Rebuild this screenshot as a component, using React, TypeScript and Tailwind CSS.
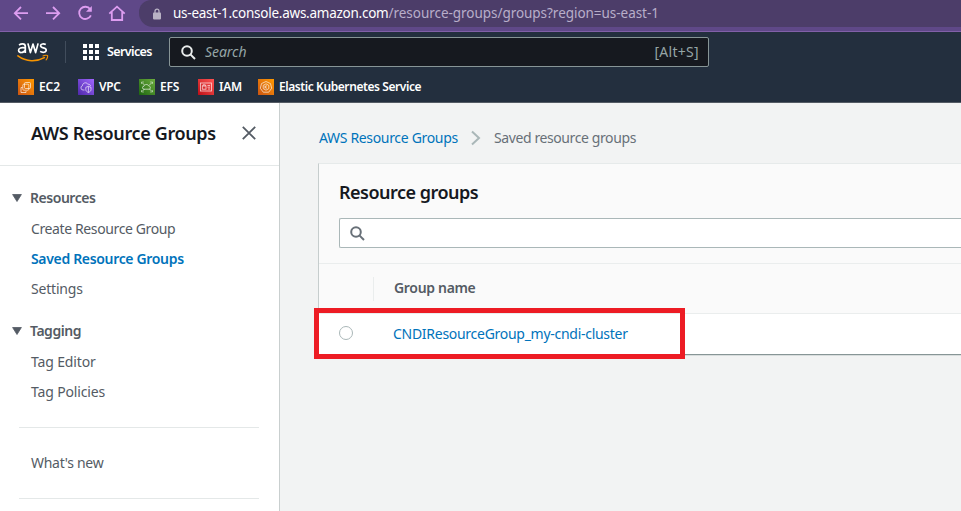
import type { ReactNode } from "react";

function BrowserBar() {
  return (
    <div className="flex h-8 shrink-0 border-b border-[#8160a8] bg-[#5f4888] text-[#dd9df0]">
      <svg width="139" height="31" viewBox="0 0 139 31" fill="none" stroke="currentColor" strokeWidth="1.8" className="shrink-0">
        <path d="M28 13.2H15M21 7l-6.2 6.2L21 19.4" />
        <path d="M46 13.2h13M53 7l6.2 6.2L53 19.4" />
        <path d="M90.2 9.2a6.1 6.1 0 1 0 .7 6.1" />
        <path d="M91.8 6v5.8H86z" fill="currentColor" stroke="none" />
        <path d="M109.3 13.6L117 6.6l7.7 7M111.8 12v8h10.4v-8" />
      </svg>
      <div className="flex h-[27px] flex-1 items-center rounded-tl-[12px] rounded-bl-[14px] bg-[#4c3d69] pl-[14px]">
        <svg width="8" height="12" viewBox="0 0 8 12" className="mr-[12px] shrink-0">
          <path d="M2 5V3.2a2 2 0 0 1 4 0V5" fill="none" stroke="#b9b2c4" strokeWidth="1.3" />
          <rect x="0" y="4.4" width="8" height="7" rx="0.8" fill="#b9b2c4" />
        </svg>
        <span className="text-[13.5px] tracking-[-0.25px] text-white">us-east-1.console.aws.amazon.com</span>
        <span className="text-[13.5px] tracking-[-0.04px] text-[#b8aec9]">/resource-groups/groups?region=us-east-1</span>
      </div>
    </div>
  );
}

function AwsLogo() {
  return (
    <svg width="32" height="22" viewBox="0 0 32 22" fill="none" className="shrink-0">
      <g stroke="#fff" strokeWidth="1.7" strokeLinejoin="round">
        <path d="M2 3.900c1.200-.7 2.400-1 3.600-1 1.900 0 2.700.9 2.700 2.600v6.500M8.300 6.900c-3.900-.7-6.700 0-6.700 2.400 0 3.200 5.200 2.900 6.700-.5" />
        <path d="M10.900 2.400l2.500 9.200 2.600-8.600 2.600 8.600 2.500-9.200" />
        <path d="M28.800 3.500c-1.900-.9-5.200-.9-5.200 1.300 0 2.700 5.600 1.500 5.600 4.200 0 2.800-4 2.700-6.100 1.400" />
      </g>
      <path d="M.9 14.900c8.600 6.200 18.600 6.100 26.400 1.700" stroke="#f79400" strokeWidth="1.6" strokeLinecap="round" />
      <path d="M26 15c1.500-.8 4.200-.9 4.600-.4.300.6-.3 3-1.500 4.200" stroke="#f79400" strokeWidth="1.1" strokeLinecap="round" />
    </svg>
  );
}

function Magnifier({ className }: { className: string }) {
  return (
    <svg width="15" height="15" viewBox="0 0 15 15" fill="none" stroke="currentColor" strokeWidth="2" className={className}>
      <circle cx="6" cy="6" r="4.8" />
      <path d="M9.4 9.4l4.600 4.600" />
    </svg>
  );
}

function Shortcut({ tile, icon, label, spacing }: { tile: string; icon: ReactNode; label: string; spacing: string }) {
  return (
    <div className="flex items-center gap-[5px] whitespace-nowrap">
      <span className={`flex size-4 items-center justify-center ${tile}`}>
        <svg width="16" height="16" viewBox="0 0 16 16" fill="none" stroke="#fff" strokeOpacity="0.75" strokeWidth="0.85">{icon}</svg>
      </span>
      <span className={`text-[12px] font-semibold text-white ${spacing}`}>{label}</span>
    </div>
  );
}

function AwsHeader() {
  return (
    <header className="flex h-[71px] shrink-0 flex-col border-b border-[#545b64] bg-[#232f3e]">
      <div className="flex h-[40px] items-center pl-[17px]">
        <AwsLogo />
        <div className="ml-4 h-[22px] w-px bg-[#414d5c]" />
        <div className="ml-[17px] grid grid-cols-3 gap-[2px]">
          {Array.from({ length: 9 }, (_, i) => <span key={i} className="size-1 bg-white" />)}
        </div>
        <span className="ml-2 w-[62px] text-[12.5px] font-semibold tracking-[-0.62px] text-white">Services</span>
        <div className="flex h-[30px] w-[540px] items-center rounded-[2px] border border-[#879596] bg-[#16191f] pr-[9px] pl-[11px]">
          <Magnifier className="text-[#eaeded]" />
          <span className="ml-[9px] pb-[2px] text-[14px] tracking-[-0.05px] text-[#95a5a6] italic">Search</span>
          <span className="ml-auto pb-[2px] text-[14px] tracking-[0.3px] text-[#95a5a6]">[Alt+S]</span>
        </div>
      </div>
      <div className="flex h-[29px] items-center gap-[18px] pl-[18px]">
        <Shortcut tile="bg-linear-to-tr from-[#cb5410] to-[#ff9900]" label="EC2" spacing="w-[21px] tracking-[-0.1px]"
          icon={<><rect x="6.5" y="3.5" width="6" height="6" rx="1" /><rect x="4.8" y="5.2" width="6" height="6" rx="1" /><path d="M4.500 8.500H3v5h5V12" /></>} />
        <Shortcut tile="bg-linear-to-tr from-[#4e27aa] to-[#a166ff]" label="VPC" spacing="w-[22px] tracking-[-0.35px]"
          icon={<><path d="M6.500 11H5a2.200 2.200 0 0 1-.5-4.300C4.300 4 8.500 2.500 9.800 5.300c1.600-.4 2.500.5 2.700 1.700" /><path d="M7.800 8.300l2.600-1 2.600 1v2.200c0 1.400-1 2.300-2.600 3-1.600-.7-2.600-1.600-2.600-3zM10.400 7.500v6" /></>} />
        <Shortcut tile="bg-linear-to-tr from-[#1b660f] to-[#6cae3e]" label="EFS" spacing="w-[20px] tracking-[-0.2px]"
          icon={<><path d="M2.500 5V3H5M11 3h2.500v2M13.500 11v2H11M5 13H2.500v-2" strokeOpacity="0.5" /><path d="M3 3.500l2.500 2.500M13 3.500L10.500 6M3 12.500L5.500 10M13 12.500L10.500 10" /><path d="M5 10.200a1.500 1.500 0 0 1 0-3c.6-2 3.700-2.400 4.600-.4 2 0 2.500 3.200.6 3.400z" /></>} />
        <Shortcut tile="bg-linear-to-tr from-[#bd0816] to-[#ff5252]" label="IAM" spacing="w-[21px] tracking-[-0.3px]"
          icon={<><rect x="2.500" y="4" width="11" height="8" /><rect x="4.300" y="7" width="3.700" height="3.200" /><path d="M5 7V5.800h2.300V7M9.500 6.500h2.500M9.500 8.200h2.500M10 10h2" /></>} />
        <Shortcut tile="bg-linear-to-tr from-[#cb5410] to-[#ff9900]" label="Elastic Kubernetes Service" spacing="tracking-[-0.42px]"
          icon={<><path d="M8 2.500l4.500 2.100 1.200 4.600-3 4H5.300l-3-4 1.200-4.600z" /><path d="M8 4.800L10.800 6.400v3.200L8 11.200 5.200 9.600V6.400zM7 6.500v3M7.200 8L9 6.500M7.200 8L9 9.500" /></>} />
      </div>
    </header>
  );
}

function NavHeading({ label }: { label: string }) {
  return (
    <div className="flex h-[31px] items-center pb-px pl-3">
      <svg width="10" height="8" viewBox="0 0 10 8" fill="#545b64" className="mr-2"><path d="M.6.500h8.800L5 7.500z" stroke="#545b64" strokeWidth=".8" strokeLinejoin="round" /></svg>
      <span className="pb-[2px] text-[14px] font-semibold tracking-[-0.46px] text-[#545b64]">{label}</span>
    </div>
  );
}

function NavItem({ label, style = "tracking-[-0.2px] text-[#545b64]" }: { label: string; style?: string }) {
  return <div className={`flex h-[30px] items-center pb-[2px] pl-[31px] text-[14px] ${style}`}>{label}</div>;
}

function Sidebar() {
  return (
    <aside className="flex w-[280px] shrink-0 flex-col border-r border-[#c9cfcf] bg-white">
      <div className="flex h-[63px] shrink-0 items-center justify-between border-b border-[#e4e8e8] pr-[23px] pb-[2px] pl-[31px]">
        <h2 className="text-[18px] font-semibold tracking-[-0.36px] whitespace-nowrap text-[#16191f]">AWS Resource Groups</h2>
        <svg width="14" height="14" viewBox="0 0 14 14" stroke="#545b64" strokeWidth="1.8"><path d="M.8.8l12.400 12.400M13.200.8L.8 13.200" /></svg>
      </div>
      <nav className="flex flex-col pt-[17px]">
        <NavHeading label="Resources" />
        <NavItem label="Create Resource Group" style="tracking-[-0.38px] text-[#545b64]" />
        <NavItem label="Saved Resource Groups" style="font-semibold tracking-[-0.33px] text-[#0073bb]" />
        <NavItem label="Settings" />
        <div className="h-3" />
        <NavHeading label="Tagging" />
        <NavItem label="Tag Editor" style="tracking-[-0.15px] text-[#545b64]" />
        <NavItem label="Tag Policies" style="tracking-[-0.15px] text-[#545b64]" />
        <div className="mt-5 mr-5 ml-[19px] h-px bg-[#e4e8e8]" />
        <div className="h-5" />
        <NavItem label="What's new" style="tracking-[-0.28px] text-[#545b64]" />
        <div className="mt-5 mr-5 ml-[19px] h-px bg-[#e4e8e8]" />
      </nav>
    </aside>
  );
}

function GroupsPanel() {
  return (
    <section className="relative ml-[38px] flex flex-col border-t border-l border-t-[#e6eaea] border-l-[#c6cdcd] bg-[#fafafa]">
      <h1 className="flex h-[54px] items-center pt-[2px] pl-5 text-[18px] font-semibold tracking-[-0.5px] text-[#16191f]">Resource groups</h1>
      <div className="ml-5 flex h-[30px] items-center rounded-l-[2px] border border-r-0 border-[#aab7b8] bg-white pl-[10px]">
        <Magnifier className="text-[#687078]" />
      </div>
      <div className="mt-[15px] flex h-[50px] items-center border-t border-[#eaeded]">
        <div className="ml-[54px] h-6 w-px bg-[#eaeded]" />
        <span className="ml-5 pb-[2px] text-[14px] font-semibold tracking-[-0.32px] text-[#545b64]">Group name</span>
      </div>
      <div className="flex h-[42px] items-center border-t border-b border-t-[#eaeded] border-b-[#879596] bg-white shadow-[0_1px_0_#d8dddd]">
        <span className="mb-[3px] ml-5 size-[14px] rounded-full border border-[#aab7b8] bg-white" />
        <span className="ml-10 pb-[2px] text-[14px] tracking-[-0.28px] text-[#0073bb]">CNDIResourceGroup_my-cndi-cluster</span>
      </div>
      <div className="absolute top-[144px] -left-[5px] h-[51px] w-[371px] border-[5px] border-[#ed1c24]" />
    </section>
  );
}

export default function App() {
  return (
    <div className="flex h-[511px] w-[961px] flex-col overflow-hidden font-['Noto_Sans',sans-serif]">
      <BrowserBar />
      <AwsHeader />
      <div className="flex min-h-0 flex-1">
        <Sidebar />
        <main className="flex flex-1 flex-col bg-[#f2f3f3]">
          <div className="flex h-[60px] shrink-0 items-center pt-[10px] pl-[39px] text-[14px]">
            <span className="w-[151px] pb-[2px] tracking-[-0.33px] text-[#0073bb]">AWS Resource Groups</span>
            <svg width="12" height="16" viewBox="0 0 12 16" fill="none" stroke="#aab7b8" strokeWidth="2"><path d="M2 1.500L9 8l-7 6.500" /></svg>
            <span className="ml-3 pb-[2px] tracking-[-0.4px] text-[#687078]">Saved resource groups</span>
          </div>
          <GroupsPanel />
        </main>
      </div>
    </div>
  );
}
